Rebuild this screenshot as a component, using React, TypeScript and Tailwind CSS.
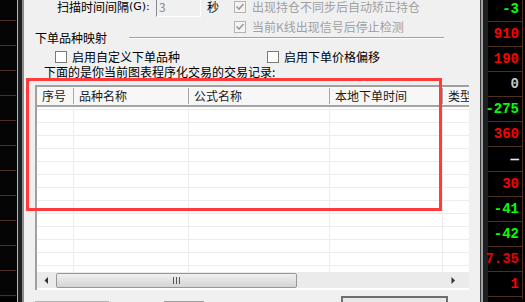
import React from "react";

const cjk = { fontFamily: '"Noto Sans CJK SC", "Noto Sans", sans-serif' };

function CheckBox({ checked, disabled }: { checked?: boolean; disabled?: boolean }) {
  return (
    <div
      className={
        "w-[12px] h-[12px] shrink-0 border flex items-center justify-center " +
        (disabled ? "border-[#b4b4b4] bg-[#f4f4f4]" : "border-[#7a7a7a] bg-white")
      }
    >
      {checked && (
        <svg width="10" height="10" viewBox="0 0 10 10">
          <path d="M1.5 4.5 L4 7 L8.5 2" fill="none" stroke={disabled ? "#9a9a9a" : "#000"} strokeWidth="1.6" />
        </svg>
      )}
    </div>
  );
}

const cols = [
  { w: "w-[37px]", label: "序号" },
  { w: "w-[115px]", label: "品种名称" },
  { w: "w-[141px]", label: "公式名称" },
  { w: "w-[113px]", label: "本地下单时间" },
  { w: "w-[60px]", label: "类型" },
];

const nums: { t: string; c: string }[] = [
  { t: "-3", c: "text-[#00ff00]" },
  { t: "910", c: "text-[#ff0000]" },
  { t: "190", c: "text-[#ff0000]" },
  { t: "0", c: "text-[#c8c8c8]" },
  { t: "-275", c: "text-[#00ff00]" },
  { t: "360", c: "text-[#ff0000]" },
  { t: "—", c: "text-[#e8e8e8]" },
  { t: "30", c: "text-[#ff0000]" },
  { t: "-41", c: "text-[#00ff00]" },
  { t: "-42", c: "text-[#00ff00]" },
  { t: "7.35", c: "text-[#e60000]" },
  { t: "1", c: "text-[#ff0000]" },
  { t: "", c: "" },
];

export default function App() {
  const rows = Array.from({ length: 13 });
  return (
    <div className="relative w-[525px] h-[302px] overflow-hidden bg-black flex" style={cjk}>
      {/* left strip */}
      <div className="w-[24px] h-full flex shrink-0">
        <div className="w-[17px] h-full bg-[#050505] flex flex-col mt-[-4px]">
          {rows.map((_, i) => (
            <div key={i} className="h-[25px] shrink-0 border-b border-[#4e3020] w-[16px]" />
          ))}
        </div>
        <div className="w-[1px] h-full bg-[#b8b8b8]" />
        <div className="w-[4px] h-full bg-[#1d2023]" />
        <div className="w-[2px] h-full bg-[#8a8a8a]" />
      </div>

      {/* dialog */}
      <div className="w-[456px] h-full bg-[#f0f0f0] shrink-0 flex flex-col text-[12px] text-black leading-[14px]">
        {/* row 1 */}
        <div className="mt-[-3px] h-[20px] flex items-center pl-[33px] shrink-0">
          <div className="w-[99px] flex items-center whitespace-nowrap">
            <span>扫描时间间隔</span>
            <span className="text-[11px]" style={{ fontFamily: '"DejaVu Sans", sans-serif' }}>(G):</span>
          </div>
          <div className="w-[45px] h-[20px] border-l border-t border-[#8a8a8a] border-r border-b border-r-white border-b-white bg-[#f0f0f0] flex items-center pl-[2px] text-[#8a8a8a]">
            3
          </div>
          <span className="ml-[6px] w-[12px]">秒</span>
          <div className="ml-[15px] flex items-center">
            <CheckBox checked disabled />
            <span className="ml-[6px] text-[#a0a0a0] whitespace-nowrap">出现持仓不同步后自动矫正持仓</span>
          </div>
        </div>
        {/* row 2 */}
        <div className="mt-[4px] h-[12px] flex items-center pl-[210px] shrink-0">
          <CheckBox checked disabled />
          <span className="ml-[6px] text-[#a0a0a0] whitespace-nowrap">当前K线出现信号后停止检测</span>
        </div>
        {/* group label */}
        <div className="mt-[-2px] h-[14px] flex items-center pl-[11px] shrink-0">
          <span className="w-[94px] whitespace-nowrap">下单品种映射</span>
          <div className="w-[315px] flex flex-col">
            <div className="h-[1px] bg-[#a0a0a0]" />
            <div className="h-[1px] bg-white" />
          </div>
        </div>
        {/* checkbox row */}
        <div className="mt-[5px] h-[14px] flex items-center pl-[31px] shrink-0">
          <div className="w-[212px] flex items-center">
            <CheckBox />
            <span className="ml-[5px] whitespace-nowrap">启用自定义下单品种</span>
          </div>
          <div className="flex items-center">
            <CheckBox />
            <span className="ml-[5px] whitespace-nowrap">启用下单价格偏移</span>
          </div>
        </div>
        {/* label */}
        <div className="mt-[1px] h-[14px] flex items-center pl-[20px] shrink-0 whitespace-nowrap">
          下面的是你当前图表程序化交易的交易记录:
        </div>
        {/* list view */}
        <div className="mt-[6px] ml-[11px] w-[434px] h-[205px] shrink-0 border-l-2 border-t-2 border-[#a0a0a0] bg-white flex flex-col overflow-hidden">
          {/* header */}
          <div className="h-[20px] shrink-0 flex bg-[#f7f7f7] border-b-2 border-[#a5a5a5]">
            {cols.map((c, i) => (
              <div key={i} className={c.w + " shrink-0 h-full flex items-center"}>
                <div className="flex-1 pl-[5px] whitespace-nowrap text-[#1a1a1a]">{c.label}</div>
                {i < 4 && <div className="w-[1px] h-[16px] bg-[#a8a8a8] mr-0" />}
              </div>
            ))}
          </div>
          {/* body */}
          <div className="h-[165px] shrink-0 flex flex-col overflow-hidden">
            <div className="h-[2px] shrink-0 flex">
              {cols.map((c, i) => (
                <div key={i} className={c.w + " shrink-0 h-full " + (i < 4 ? "border-r border-[#ececec]" : "")} />
              ))}
            </div>
            {rows.map((_, r) => (
              <div key={r} className="h-[13px] shrink-0 flex border-t border-[#ececec]">
                {cols.map((c, i) => (
                  <div key={i} className={c.w + " shrink-0 h-full " + (i < 4 ? "border-r border-[#ececec]" : "")} />
                ))}
              </div>
            ))}
          </div>
          {/* scrollbar */}
          <div className="h-[16px] shrink-0 bg-[#ebebeb] flex items-center">
            <div className="w-[19px] h-full flex items-center justify-center">
              <svg width="5" height="7" viewBox="0 0 5 7">
                <path d="M4 0 L0.5 3.5 L4 7 Z" fill="#333" />
              </svg>
            </div>
            <div className="w-[241px] h-[15px] rounded-[2px] border border-[#979797] bg-gradient-to-b from-[#f0f0f0] to-[#d4d4d4] flex items-center justify-center">
              <svg width="7" height="7" viewBox="0 0 7 7">
                <path d="M0.5 0 V7 M3.5 0 V7 M6.5 0 V7" stroke="#555" strokeWidth="1" />
              </svg>
            </div>
            <div className="flex-1" />
            <div className="w-[18px] h-full flex items-center justify-start">
              <svg width="5" height="7" viewBox="0 0 5 7">
                <path d="M0.5 0 L4 3.5 L0.5 7 Z" fill="#333" />
              </svg>
            </div>
          </div>
        </div>
        {/* bottom row */}
        <div className="mt-[6px] flex items-start shrink-0">
          <div className="ml-[11px] mt-[5px] w-[74px] h-[14px] bg-white border-t border-[#b0b0b0]" />
          <div className="ml-[55px] mt-[5px] w-[40px] h-[14px] bg-[#e4e4e4] border-t border-[#a0a0a0]" />
          <div className="ml-[137px] w-[107px] h-[20px] border-2 border-[#6e6e6e] bg-[#e8e8e8]" />
        </div>
      </div>

      {/* right strip */}
      <div className="flex h-full shrink-0">
        <div className="w-[1px] h-full bg-[#3c3c3c]" />
        <div className="w-[2px] h-full bg-[#a0a0a0]" />
        <div className="w-[5px] h-full bg-[#1d2023]" />
        <div className="w-[35px] h-full bg-black border-r border-[#4e3020] flex flex-col mt-[-3px]">
          {nums.map((n, i) => (
            <div
              key={i}
              className={"h-[25px] shrink-0 border-b border-[#4e3020] flex items-center justify-end pr-[3px] font-bold text-[14px] " + n.c}
              style={{ fontFamily: '"Liberation Mono", monospace' }}
            >
              {n.t}
            </div>
          ))}
        </div>
        <div className="w-[2px] h-full bg-black" />
      </div>

      {/* red annotation */}
      <div className="absolute left-[26px] top-[78px] w-[416px] h-[133px] border-[3px] border-[#ff3b3b] pointer-events-none" />
    </div>
  );
}
